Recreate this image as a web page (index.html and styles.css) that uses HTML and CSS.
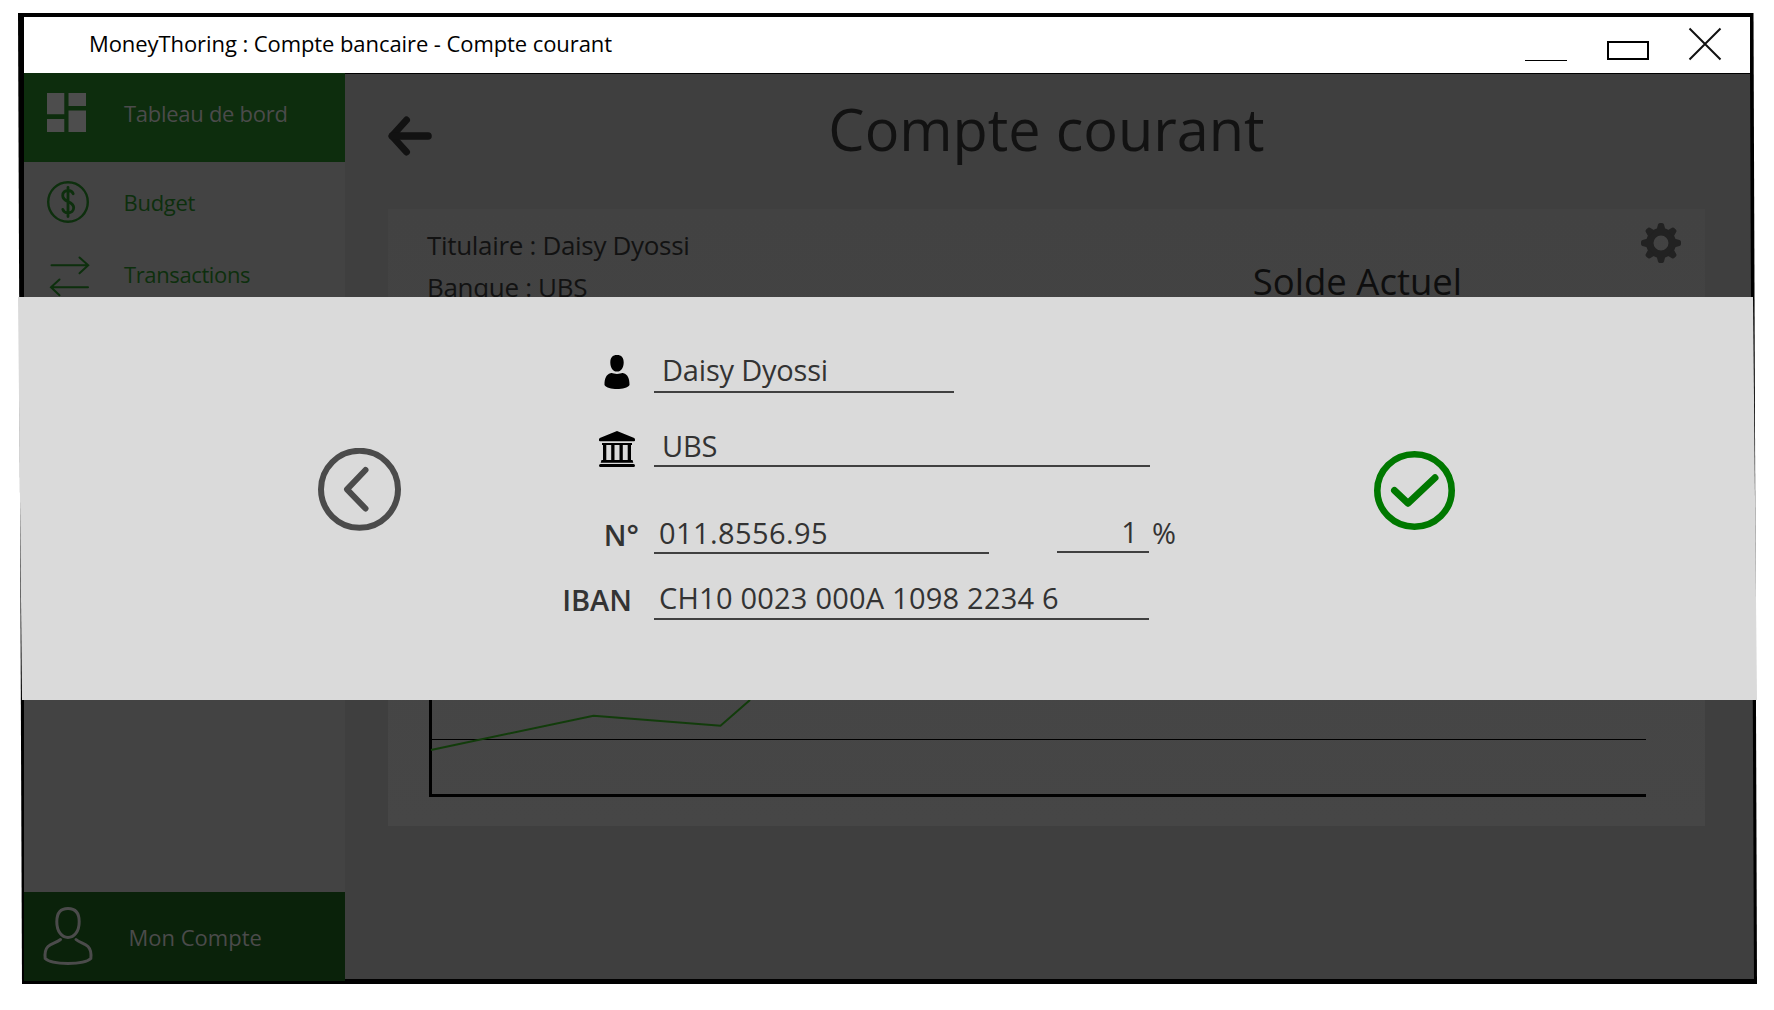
FILE: index.html
```html
<!DOCTYPE html>
<html lang="fr">
<head>
<meta charset="utf-8">
<title>MoneyThoring : Compte bancaire - Compte courant</title>
<link rel="stylesheet" href="styles.css">
</head>
<body>
<div class="window">
  <header class="titlebar">
    <span class="titlebar-text">MoneyThoring : Compte bancaire - Compte courant</span>
    <div class="controls">
      <span class="minimize"></span>
      <span class="maximize"></span>
      <svg class="close" width="34" height="34" viewBox="0 0 34 34"><path d="M1.500 1.500 32.500 32.500M32.500 1.500 1.500 32.500" fill="none" stroke="#111" stroke-width="2"/></svg>
    </div>
  </header>
  <div class="content">
    <nav class="sidebar">
      <div class="item active">
        <svg class="icon" width="52" height="52" viewBox="0 0 52 52"><path d="M5 6h17.300v21.300H5zM26.500 6H44v13H26.500zM5 32h17.300v13H5zM26.500 23.500H44V45H26.500z" fill="#4d4d4d"/></svg>
        <span class="t-dash">Tableau de bord</span>
      </div>
      <div class="item budget">
        <svg class="icon" width="52" height="52" viewBox="0 0 52 52" fill="none" stroke="#0d2f0d"><circle cx="26" cy="26" r="19.800" stroke-width="2.400"/><path d="M26 11.500v29M31.200 17.800c-1-2.400-3-3.300-5.200-3.300-3.200 0-5.300 2-5.300 5 0 3.400 2.600 4.900 5.300 6.100 3 1.300 5.700 2.900 5.700 6 0 3.400-2.400 5.300-5.700 5.300-2.400 0-4.400-1-5.200-3.500" stroke-width="2.800" stroke-linecap="round"/></svg>
        <span class="t-budget">Budget</span>
      </div>
      <div class="item transactions">
        <svg class="icon" width="52" height="52" viewBox="0 0 52 52" fill="none" stroke="#0d2f0d" stroke-width="2" stroke-linecap="round"><path d="M9.500 15.300H46M37.500 7.500l8.700 7.800-8.700 8M46 37.300H9.500M17.500 29.500l-8.500 7.800 8.500 8"/></svg>
        <span class="t-trans">Transactions</span>
      </div>
      <div class="item account">
        <svg class="icon" width="52" height="60" viewBox="0 0 52 60" fill="none" stroke="#4b4b4b" stroke-width="3" stroke-linecap="round"><path d="M26 2.500c7.500 0 11.200 4.500 11.200 13.200 0 9.600-4.800 15.800-11.200 15.800s-11.200-6.200-11.200-15.800C14.800 7 18.500 2.500 26 2.500z"/><path d="M18.500 33.500c-4 3.300-9 3.600-12.500 7-3 3-3.300 7.500-2.800 12 6.500 6.500 39.100 6.500 45.600 0 .5-4.500.2-9-2.800-12-3.500-3.400-8.500-3.700-12-7"/></svg>
        <span class="t-account">Mon Compte</span>
      </div>
    </nav>
    <main class="main">
      <div class="page-head">
        <svg class="back" width="46" height="40" viewBox="0 0 46 40" fill="none" stroke="#121212" stroke-linecap="round" stroke-linejoin="round"><path d="M18.500 4 4 20 18.500 36" stroke-width="7"/><path d="M4.500 20h35.500" stroke-width="7.600"/></svg>
        <h1>Compte courant</h1>
      </div>
      <section class="card">
        <div class="card-head">
          <div class="owner"><p>Titulaire : Daisy Dyossi</p><p>Banque : UBS</p></div>
          <div class="balance">Solde Actuel</div>
          <svg class="gear" width="40" height="40" viewBox="-20 -20 40 40"><g fill="#222"><path fill-rule="evenodd" d="M0-15A15 15 0 1 1 0 15 15 15 0 1 1 0-15zM0-7.500A7.500 7.500 0 1 0 0 7.500 7.500 7.500 0 1 0 0-7.500z"/><path id="teeth" d="M-4.500-13 -3-18.500Q-2.500-20-1-20H1Q2.500-20 3-18.500L4.500-13zM-4.500 13-3 18.500Q-2.500 20-1 20H1Q2.500 20 3 18.500L4.500 13z"/><use href="#teeth" transform="rotate(45)"/><use href="#teeth" transform="rotate(90)"/><use href="#teeth" transform="rotate(135)"/></g></svg>
        </div>
        <svg class="chart" width="1217" height="300" viewBox="0 0 1217 300">
          <path d="M2 242.500H1217" stroke="#000" fill="none"/>
          <path d="M1.500 0V298.500H1217" stroke="#000" stroke-width="3" fill="none"/>
          <path d="M2 253 164.500 218.700 291.500 228.700 321 203" stroke="#123c0b" stroke-width="2" fill="none"/>
        </svg>
      </section>
    </main>
  </div>
</div>

<div class="dialog">
  <svg class="cancel" width="84" height="84" viewBox="0 0 84 84" fill="none" stroke="#4b4b4b" stroke-width="6"><circle cx="41.500" cy="41.300" r="38.500"/><path d="M47.500 22 29 41.300 47.500 60.500" stroke-linecap="round" stroke-linejoin="round"/></svg>
  <form class="form">
    <div class="row r1">
      <div class="label"><svg width="26" height="36" viewBox="0 0 26 36"><path d="M13 1c4.500 0 6.700 2.500 6.700 7.500S17.300 17.600 13 17.600 6.300 13.500 6.300 8.500 8.500 1 13 1zM6.500 19.200C8.500 18.500 10 20 13 20s4.500-1.500 6.500-.8C24 20.500 25.600 25 25.500 31c-3 5.300-22 5.300-25 0C.4 25 2 20.500 6.500 19.200z"/></svg></div>
      <span class="field">Daisy Dyossi</span>
    </div>
    <div class="row r2">
      <div class="label"><svg width="36" height="36" viewBox="0 0 36 36"><path d="M18 0 35.200 7Q36 7.500 36 8.500V9.500Q36 10.300 35 10.300H1Q0 10.300 0 9.500V8.500Q0 7.500 .8 7zM3 12h30v2h-1v15h1.500l.8 2.800H1.700L2.500 29H4V14H3zM7.300 14v15h4.900V14zM15.500 14v15h5V14zM23.800 14v15h4.900V14zM1.500 33h33q1.500 0 1.500 1.500T34.500 36h-33Q0 36 0 34.500T1.500 33z" fill-rule="evenodd"/></svg></div>
      <span class="field">UBS</span>
    </div>
    <div class="row r3">
      <div class="label">N°</div>
      <span class="field number">011.8556.95</span>
      <span class="field rate">1</span><span class="percent">%</span>
    </div>
    <div class="row r4">
      <div class="label">IBAN</div>
      <span class="field">CH10 0023 000A 1098 2234 6</span>
    </div>
  </form>
  <svg class="confirm" width="82" height="80" viewBox="0 0 82 80" fill="none" stroke="#007800"><ellipse cx="40.500" cy="39.500" rx="37.200" ry="36.200" stroke-width="6.600"/><path d="M20.500 39.500 34 52.200 61 26.800" stroke-width="7" stroke-linecap="round" stroke-linejoin="round"/></svg>
</div>
</body>
</html>
```
FILE: styles.css
```css
* { box-sizing: border-box; }
body {
  margin: 0;
  padding: 13px 0 0 18px;
  height: 1010px;
  overflow: hidden;
  position: relative;
  background: #fff;
  font-family: "Open Sans", "Noto Sans", sans-serif;
}
h1, p { margin: 0; font-weight: 400; }
svg { display: block; flex: none; }
span { white-space: nowrap; }

/* The frame leans slightly to the right towards its foot. */
.window {
  width: 1739px;
  height: 971px;
  padding: 4px 3px 3px 6px;
  background: #000;
  display: flex;
  flex-direction: column;
  clip-path: polygon(0 0, 1735.500px 0, 1739px 100%, 4px 100%);
}

.titlebar {
  height: 56px;
  width: 1726px;
  flex: none;
  background: #fff;
  display: flex;
  justify-content: space-between;
  padding: 0 28px 3px 65px;
}
.titlebar-text { font-size: 22px; line-height: 53px; letter-spacing: -0.08px; color: #000; }
.controls { display: flex; align-items: flex-start; }
.minimize { width: 42px; height: 1px; background: #000; margin: 43px 40px 0 0; }
.maximize { width: 42px; height: 19px; border: 2px solid #000; margin: 24px 39px 0 0; }
.close { margin-top: 10px; }

.content { flex: 1; display: flex; min-height: 0; }

.sidebar {
  width: 321px;
  background: #434343;
  color: #0d2f0d;
  display: flex;
  flex-direction: column;
  font-size: 22px;
  line-height: 30px;
  letter-spacing: -0.28px;
}
.item { display: flex; align-items: center; padding-left: 18px; }
.active { height: 89px; background: #0d2d0d; color: #4b4b4b; padding-bottom: 9px; }
.budget { height: 80px; }
.transactions { height: 68px; }
.transactions span { margin-bottom: 4px; letter-spacing: -0.38px; }
.account { height: 89px; margin-top: auto; background: #0a220a; color: #4b4b4b; letter-spacing: 0; }
.account .icon { margin-bottom: 2px; }
.t-dash, .t-trans { margin-left: 30px; }
.t-budget { margin-left: 29.5px; }
.t-account { margin-left: 34.5px; }

.main {
  width: 1409px;
  height: 906px;
  padding: 0 49px 0 43px;
  border-top: 1px solid #000;
  background: #3f3f3f;
  clip-path: polygon(0 0, 1405px 0, 1409px 100%, 0 100%);
}
.page-head {
  height: 135px;
  padding-top: 11px;
  display: grid;
  grid-template-columns: 46px 1fr 46px;
}
.back { margin-top: 31px; }
h1 { font-size: 57.6px; line-height: 88px; text-align: center; color: #121212; }

.card {
  width: 1317px;
  height: 617px;
  background: linear-gradient(#424242, #464646);
  padding: 14px 24px 29px 39px;
  display: flex;
  flex-direction: column;
  justify-content: space-between;
  color: #121212;
}
.card-head { display: flex; align-items: flex-start; }
.owner { padding-top: 1px; font-size: 26px; line-height: 42px; letter-spacing: -0.32px; }
.balance { margin: 33px 179px 0 auto; font-size: 36.5px; line-height: 50px; color: #0e0e0e; }
.chart { margin-left: 2px; }

.dialog {
  position: absolute;
  left: 18px;
  top: 297px;
  width: 1739px;
  height: 403px;
  background: #dadada;
  clip-path: polygon(0 0, 1735px 0, 1739px 100%, 4px 100%);
  display: flex;
  color: #333;
  font-size: 29px;
  line-height: 40px;
}
.cancel { margin: 151px 0 0 300px; }
.confirm { margin: 154px 301px 0 auto; }
.form { margin: 48px 0 0 141px; width: 640px; }
.row { display: flex; align-items: flex-end; }
.r1 { height: 48px; }
.r2 { height: 74px; line-height: 38px; }
.r3 { height: 87px; line-height: 38px; }
.r4 { height: 66px; }
.label { width: 111px; flex: none; font-weight: 600; display: flex; justify-content: flex-end; }
.field { border-bottom: 2px solid #404040; padding-left: 5px; letter-spacing: 0.22px; }
.r1 .label { padding: 0 24.500px 3px 0; }
.r2 .label { padding-right: 19px; }
.r3 .label { padding-right: 15px; }
.r4 .label { padding-right: 22px; }
.r1 .field { width: 300px; padding: 0 0 1px 8px; letter-spacing: -0.2px; }
.r2 .field { width: 496px; padding-left: 8px; letter-spacing: -0.2px; }
.r4 .field { width: 495px; }
.field.number { width: 335px; letter-spacing: 0.42px; }
.field.rate { width: 92px; margin: 0 3px 1px 68px; padding: 0 11px 0 0; text-align: right; }
.percent { margin-bottom: 2px; }
```
